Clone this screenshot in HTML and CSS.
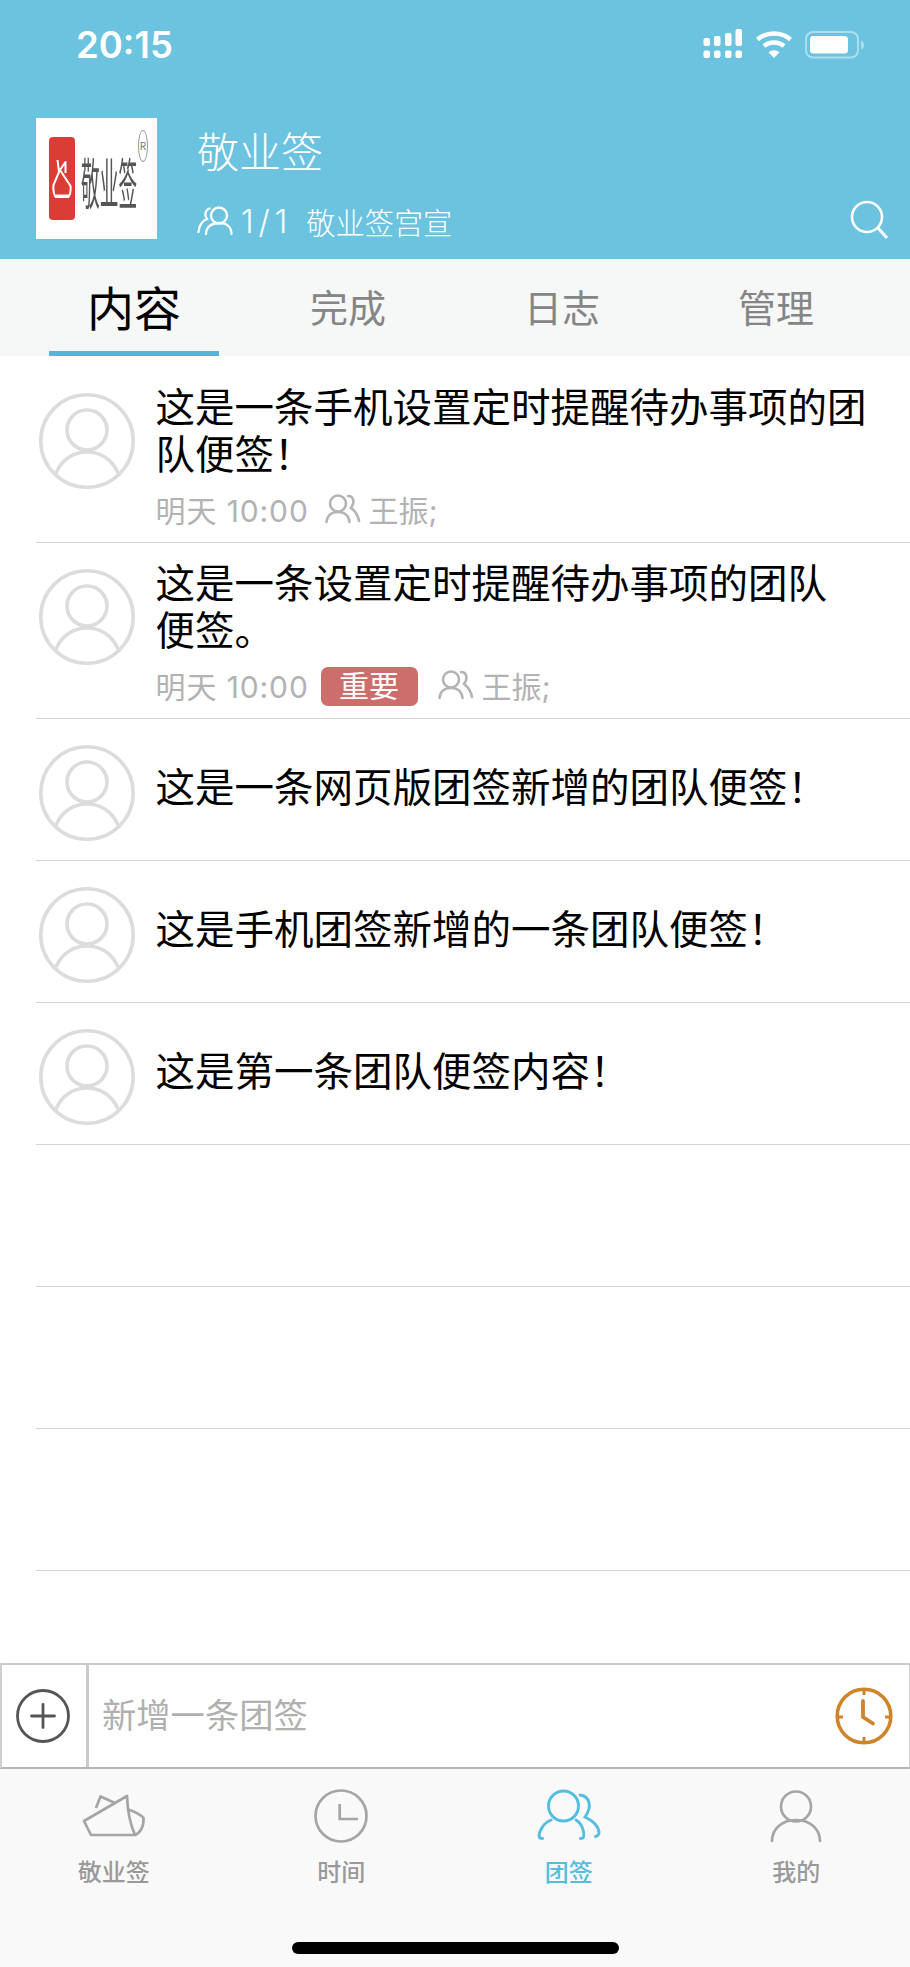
FILE: index.html
```html
<!DOCTYPE html>
<html lang="zh-CN">
<head>
<meta charset="utf-8">
<title>敬业签</title>
<link rel="stylesheet" href="styles.css">
</head>
<body>
<div class="page">
  <header class="header">
    <div class="status">
      <span class="clock-time">20:15</span>
      <div class="status-icons">
        <svg class="sig" width="40" height="30" viewBox="0 0 40 30"><g fill="#fff"><rect x="0.5" y="9" width="6.5" height="8" rx="2"/><rect x="11" y="7" width="6.5" height="10" rx="2"/><rect x="22" y="4" width="6.5" height="13" rx="2"/><rect x="32.5" y="0" width="6.5" height="17" rx="2"/><rect x="0.5" y="21.5" width="6.5" height="7.5" rx="2"/><rect x="11" y="21.5" width="6.5" height="7.5" rx="2"/><rect x="22" y="21.5" width="6.5" height="7.5" rx="2"/><rect x="32.5" y="21.5" width="6.5" height="7.5" rx="2"/></g></svg>
        <svg class="wifi" width="38" height="28" viewBox="0 0 38 28"><g fill="none" stroke="#fff" stroke-width="4.4"><path d="M2.5 9.5C11.5 1.5 26.5 1.5 35.5 9.5"/><path d="M9 16C14.5 11.3 23.5 11.3 29 16"/></g><path d="M13.5 22.3C16.6 19.6 21.4 19.6 24.5 22.3L19 28Z" fill="#fff"/></svg>
        <svg class="batt" width="60" height="28" viewBox="0 0 60 28"><rect x="1" y="1" width="52" height="25.5" rx="7" fill="none" stroke="#fff" stroke-opacity=".45" stroke-width="2"/><rect x="5" y="5" width="38" height="17.5" rx="3.5" fill="#fff"/><path d="M56 9.5C58 10.5 59 12 59 14S58 17.5 56 18.5Z" fill="#fff" fill-opacity=".45"/></svg>
      </div>
    </div>
    <div class="team">
      <div class="logo">
        <span class="logo-mark">
          <svg width="20" height="40" viewBox="0 0 20 40"><g fill="none" stroke="#fff" stroke-width="2" stroke-linejoin="round"><path d="M5.500 1L7 13L1.500 26C1 31 1.500 35 3.500 38H16.500C18.500 35 19 31 18.500 27L8 11L13.500 3V14"/><path d="M3.500 37H16.500" stroke-width="3"/></g></svg>
        </span>
        <span class="logo-text">敬业签</span>
        <span class="logo-reg">R</span>
      </div>
      <div class="team-info">
        <div class="team-name">敬业签</div>
        <div class="team-sub">
          <svg class="ico-group" width="36" height="30" viewBox="0 0 36 30"><g fill="none" stroke="#fff" stroke-width="2.300" stroke-linecap="round"><circle cx="22" cy="9.500" r="8"/><path d="M9 28C9 21 14.500 17 22 17S34.500 21 34.500 28"/><path d="M12.500 2.500C8.500 3.500 7 9 10 13C5 15 2 20 1.500 26"/></g></svg>
          <span class="team-count">1/1</span>
          <span class="team-label">敬业签宫宣</span>
        </div>
      </div>
      <svg class="ico-search" width="40" height="40" viewBox="0 0 40 40"><g fill="none" stroke="#fff" stroke-width="2.600"><circle cx="17" cy="17" r="15"/><path d="M28 28L37 38" stroke-width="3"/></g></svg>
    </div>
  </header>

  <nav class="tabs">
    <a class="tab tab-active">内容</a>
    <a class="tab">完成</a>
    <a class="tab">日志</a>
    <a class="tab">管理</a>
  </nav>

  <main class="list">
    <article class="row row-tall">
      <svg class="avatar" width="96" height="96" viewBox="0 0 96 96"><g fill="none" stroke="#dcdcdc" stroke-width="3.600"><circle cx="48" cy="48" r="46.200"/><circle cx="48" cy="37" r="20"/><path d="M17 80C23 66 35 59 48 59S73 66 79 80"/></g></svg>
      <div class="body">
        <p class="note">这是一条手机设置定时提醒待办事项的团<br>队便签！</p>
        <div class="meta">
          <span class="when">明天 10:00</span>
          <svg class="ico-meta" width="36" height="30" viewBox="0 0 36 30"><g fill="none" stroke="#b4b4b4" stroke-width="2.600" stroke-linecap="round"><circle cx="13" cy="9.500" r="8"/><path d="M1.500 28C2 22 6 18 13 18S24 22 24.500 28"/><path d="M23 2C29 2 30 9 26 14C30 17 33 21 34 27"/></g></svg>
          <span class="who">王振;</span>
        </div>
      </div>
    </article>
    <article class="row row-tall">
      <svg class="avatar" width="96" height="96" viewBox="0 0 96 96"><g fill="none" stroke="#dcdcdc" stroke-width="3.600"><circle cx="48" cy="48" r="46.200"/><circle cx="48" cy="37" r="20"/><path d="M17 80C23 66 35 59 48 59S73 66 79 80"/></g></svg>
      <div class="body">
        <p class="note">这是一条设置定时提醒待办事项的团队<br>便签。</p>
        <div class="meta">
          <span class="when">明天 10:00</span>
          <span class="tag">重要</span>
          <svg class="ico-meta" width="36" height="30" viewBox="0 0 36 30"><g fill="none" stroke="#b4b4b4" stroke-width="2.600" stroke-linecap="round"><circle cx="13" cy="9.500" r="8"/><path d="M1.500 28C2 22 6 18 13 18S24 22 24.500 28"/><path d="M23 2C29 2 30 9 26 14C30 17 33 21 34 27"/></g></svg>
          <span class="who">王振;</span>
        </div>
      </div>
    </article>
    <article class="row">
      <svg class="avatar" width="96" height="96" viewBox="0 0 96 96"><g fill="none" stroke="#dcdcdc" stroke-width="3.600"><circle cx="48" cy="48" r="46.200"/><circle cx="48" cy="37" r="20"/><path d="M17 80C23 66 35 59 48 59S73 66 79 80"/></g></svg>
      <div class="body"><p class="note">这是一条网页版团签新增的团队便签！</p></div>
    </article>
    <article class="row">
      <svg class="avatar" width="96" height="96" viewBox="0 0 96 96"><g fill="none" stroke="#dcdcdc" stroke-width="3.600"><circle cx="48" cy="48" r="46.200"/><circle cx="48" cy="37" r="20"/><path d="M17 80C23 66 35 59 48 59S73 66 79 80"/></g></svg>
      <div class="body"><p class="note">这是手机团签新增的一条团队便签！</p></div>
    </article>
    <article class="row">
      <svg class="avatar" width="96" height="96" viewBox="0 0 96 96"><g fill="none" stroke="#dcdcdc" stroke-width="3.600"><circle cx="48" cy="48" r="46.200"/><circle cx="48" cy="37" r="20"/><path d="M17 80C23 66 35 59 48 59S73 66 79 80"/></g></svg>
      <div class="body"><p class="note">这是第一条团队便签内容！</p></div>
    </article>
    <div class="row"></div>
    <div class="row"></div>
    <div class="row"></div>
  </main>

  <div class="composer">
    <div class="composer-add">
      <svg width="54" height="54" viewBox="0 0 54 54"><g fill="none" stroke="#555" stroke-width="2.800"><circle cx="27" cy="27" r="25.500"/><path d="M15.500 27H38.500M27 15.500V38.500" stroke-linecap="round"/></g></svg>
    </div>
    <div class="composer-input">
      <span class="placeholder">新增一条团签</span>
      <svg class="ico-remind" width="58" height="58" viewBox="0 0 58 58"><g fill="none" stroke="#cf8429" stroke-width="3.600"><circle cx="29" cy="29" r="26.800"/><path d="M29 2.500V8M29 50V55.500M2.500 30H8M50 30H55.500" stroke-width="3"/><path d="M28 14V30L38 36.500" stroke-linecap="round" stroke-width="3.800"/></g></svg>
    </div>
  </div>

  <footer class="tabbar">
    <div class="tabbar-items">
      <a class="bar-item">
        <svg width="64" height="52" viewBox="0 0 64 52"><g fill="none" stroke="#a5a5a5" stroke-width="2.700" stroke-linejoin="round"><path d="M2 31L45 6C45.500 20 47.500 33 53 45H9Z"/><path d="M14 18L18.500 6.500L33 13"/><path d="M45 19C54 22 59 25 61.500 28C62 37 58 43 53 45"/></g></svg>
        <span>敬业签</span>
      </a>
      <a class="bar-item">
        <svg width="54" height="54" viewBox="0 0 54 54"><g fill="none" stroke="#a5a5a5" stroke-width="2.700"><circle cx="27" cy="27" r="25.500"/><path d="M25.700 15V30H44"/></g></svg>
        <span>时间</span>
      </a>
      <a class="bar-item bar-active">
        <svg width="64" height="54" viewBox="0 0 64 54"><g fill="none" stroke="#55bde0" stroke-width="2.900" stroke-linecap="round"><circle cx="26.500" cy="17" r="15"/><path d="M3 49C0.500 47 4 35 14 31M39 31C46 35 48 46 46 49L43.500 49.500M3 49L5.500 49.500"/><path d="M43 6C52 7 56 17 48 28C56 32 62 38 62 44C62 46 60 47 58.500 47.500"/></g></svg>
        <span>团签</span>
      </a>
      <a class="bar-item">
        <svg width="54" height="54" viewBox="0 0 54 54"><g fill="none" stroke="#a5a5a5" stroke-width="2.700" stroke-linecap="round"><circle cx="27" cy="17.500" r="15"/><path d="M3 52C3 40 13 31 27 31S51 40 51 52"/></g></svg>
        <span>我的</span>
      </a>
    </div>
    <div class="home-bar"></div>
  </footer>
</div>
</body>
</html>
```

FILE: styles.css
```css
* { box-sizing: border-box; }
html, body { margin: 0; padding: 0; }
body {
  font-family: "Noto Sans CJK SC", "Noto Sans", sans-serif;
  background: #fff;
  color: #000;
}
p { margin: 0; }
svg { display: block; flex: none; }

.page {
  width: 910px;
  height: 1967px;
  display: flex;
  flex-direction: column;
  overflow: hidden;
}

/* Header */
.header { height: 259px; background: #6bc3e0; color: #fff; }
.status {
  height: 118px;
  display: flex;
  justify-content: space-between;
  padding: 24px 45px 0 76px;
}
.clock-time {
  font-family: Inter, sans-serif;
  font-size: 36.500px;
  font-weight: 600;
  line-height: 42px;
}
.status-icons { display: flex; gap: 12px; align-items: flex-start; padding-top: 5px; }
.wifi { margin-top: 1px; }
.batt { margin-top: 2px; }

.team { height: 141px; display: flex; padding-left: 36px; position: relative; }
.logo {
  width: 121px;
  height: 121px;
  background: #fff;
  position: relative;
  display: flex;
  align-items: center;
  padding-left: 13px;
  color: #555;
  flex: none;
}
.logo-mark {
  width: 26px;
  height: 83px;
  background: #d93d36;
  border-radius: 4px;
  display: flex;
  align-items: center;
  justify-content: center;
  flex: none;
}
.logo-text {
  flex: none;
  width: 56px;
  font-size: 55px;
  line-height: 55px;
  white-space: nowrap;
  margin-left: 6px;
  margin-top: 3px;
  transform-origin: left center;
  transform: scaleX(.34);
  filter: blur(.5px);
}
.logo-reg {
  position: absolute;
  left: 102px;
  top: 12px;
  width: 10px;
  height: 32px;
  border: 1px solid #999;
  border-radius: 50%;
  font-size: 10px;
  line-height: 30px;
  text-align: center;
  color: #777;
}
.team-info { margin-left: 40px; }
.team-name { font-size: 42px; line-height: 48px; margin-top: 8px; font-weight: 300; }
.team-sub { display: flex; align-items: center; margin-top: 29px; height: 36px; }
.team-count { font-family: Inter, sans-serif; font-size: 32px; font-weight: 300; letter-spacing: 5px; margin-left: 8px; }
.team-label { font-size: 29.200px; margin-left: 14px; font-weight: 300; }
.ico-search { position: absolute; right: 20px; top: 82px; }

/* Tabs */
.tabs { height: 97px; background: #f6f7f7; display: flex; padding: 0 27px; flex: none; }
.tab {
  width: 214px;
  display: flex;
  align-items: center;
  justify-content: center;
  font-size: 38px;
  color: #858585;
  font-weight: 400;
  padding-bottom: 4px;
  position: relative;
}
.tab-active { color: #000; font-size: 47px; }
.tab-active::after {
  content: "";
  position: absolute;
  left: 22px;
  right: 22px;
  bottom: 0;
  height: 5px;
  background: #55b6da;
}

/* List */
.list { flex: 1; padding-top: 11px; }
.row {
  height: 142px;
  margin-left: 36px;
  border-bottom: 1.500px solid #d4d4d4;
  display: flex;
  padding-right: 20px;
}
.row-tall { height: 176px; }
.avatar { margin: 26px 0 0 3px; }
.body { margin-left: 20.500px; flex: 1; display: flex; flex-direction: column; justify-content: center; padding-bottom: 10px; }
.row-tall .body { justify-content: flex-start; padding: 14px 0 0; }
.note { font-size: 39.500px; line-height: 47px; color: #000; white-space: nowrap; font-weight: 400; }
.meta {
  display: flex;
  align-items: center;
  height: 36px;
  margin-top: 16px;
  font-size: 30px;
  color: #b2b2b2;
  font-family: Inter, "Noto Sans CJK SC", sans-serif;
  font-weight: 400;
}
.when { white-space: nowrap; width: 154px; letter-spacing: .9px; }
.ico-meta { margin-left: 15px; }
.who { margin-left: 8px; }
.tag {
  margin-left: 11px;
  margin-top: 2px;
  width: 97px;
  height: 39px;
  line-height: 38px;
  text-align: center;
  background: #cc6f6c;
  color: #fff;
  border-radius: 7px;
}
.tag + .ico-meta { margin-left: 20px; }

/* Composer */
.composer {
  height: 106px;
  flex: none;
  display: flex;
  border-top: 2px solid #cbcbcb;
  border-bottom: 2px solid #b4b4b4;
  border-left: 2px solid #cfcfcf;
  border-right: 1px solid #cfcfcf;
}
.composer-add {
  width: 87px;
  border-right: 3px solid #cbcbcb;
  display: flex;
  align-items: center;
  justify-content: center;
  padding-right: 2px;
}
.composer-input {
  flex: 1;
  display: flex;
  align-items: center;
  justify-content: space-between;
  padding: 0 16px 0 13px;
}
.placeholder { font-size: 34.300px; color: #b0b0b0; font-weight: 400; padding-bottom: 7px; }

/* Tab bar */
.tabbar { height: 198px; flex: none; background: #f9f9f9; display: flex; flex-direction: column; }
.tabbar-items { display: flex; height: 173px; }
.bar-item {
  width: 227.500px;
  display: flex;
  flex-direction: column;
  align-items: center;
  padding-top: 20px;
  font-size: 24px;
  line-height: 32px;
  font-weight: 500;
  color: #999;
}
.bar-item svg { height: 54px; }
.bar-item span { margin-top: 12px; }
.bar-active { color: #55bde0; }
.home-bar {
  width: 327px;
  height: 11.500px;
  border-radius: 6px;
  background: #000;
  margin-left: 292px;
}
```
